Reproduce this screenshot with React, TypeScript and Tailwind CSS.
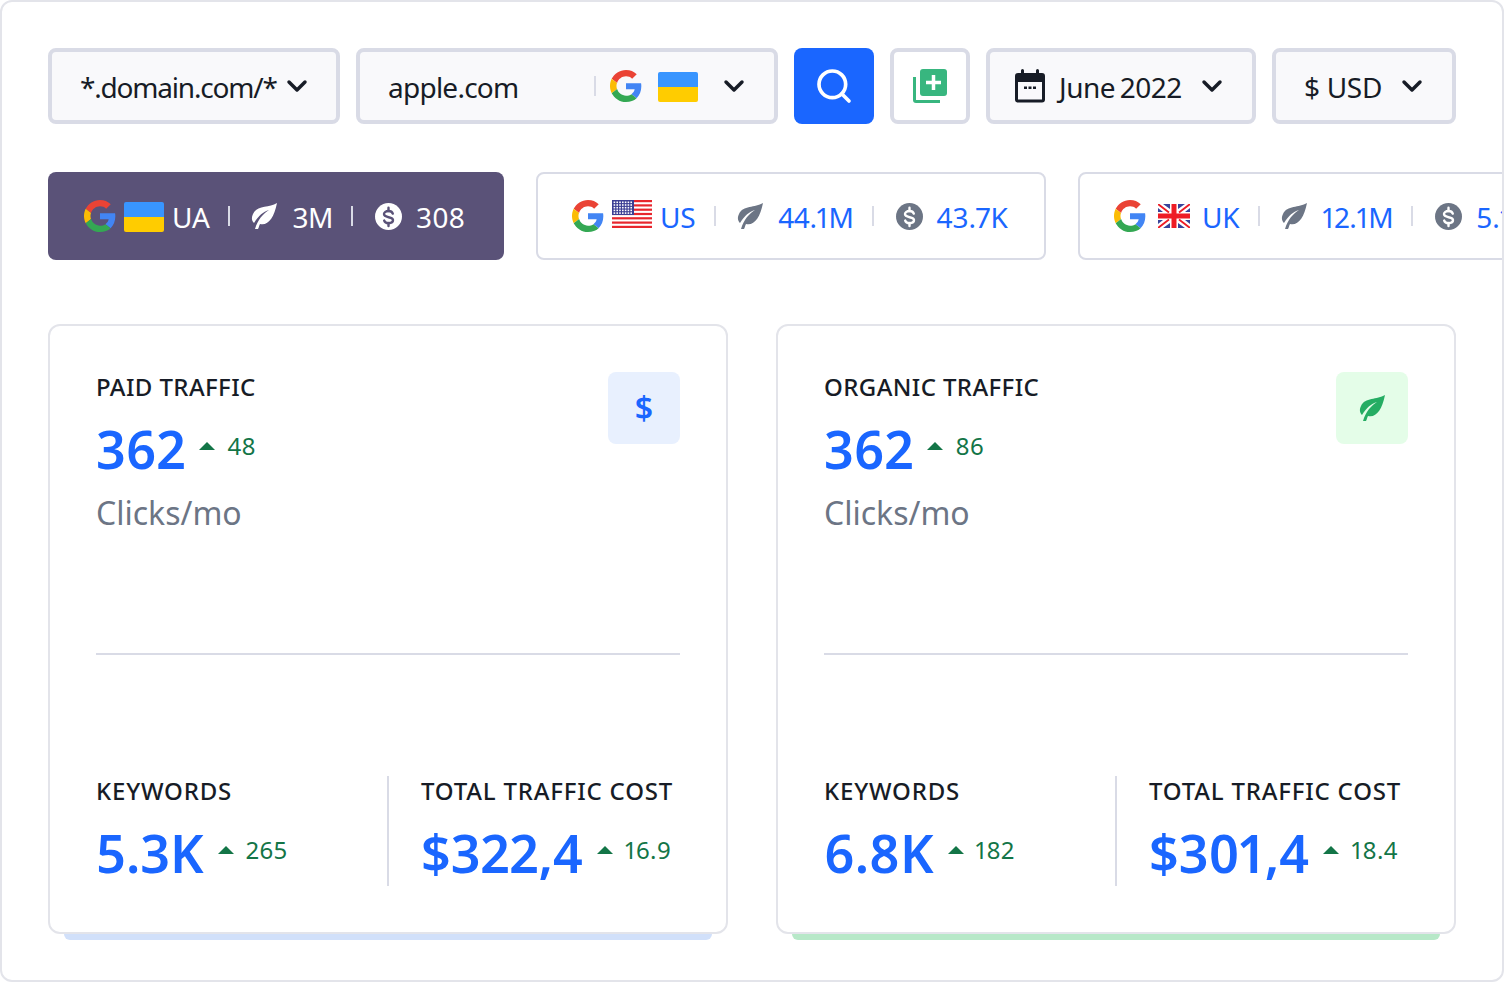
import { ChevronDown, Search } from 'lucide-react'

const font = "font-['Noto_Sans',sans-serif]"

function GoogleIcon() {
  return (
    <svg viewBox="0 0 48 48" className="h-8 w-8 shrink-0">
      <path fill="#EA4335" d="M24 9.5c3.5 0 6.7 1.2 9.2 3.6l6.9-6.9C35.9 2.4 30.5 0 24 0 14.6 0 6.5 5.4 2.6 13.2l8 6.2C12.5 13.7 17.800 9.500 24 9.500z" />
      <path fill="#4285F4" d="M47 24.500c0-1.600-.1-3.100-.4-4.500H24v9h13c-.6 3-2.200 5.500-4.800 7.200l7.700 6C44.400 38 47 31.800 47 24.500z" />
      <path fill="#FBBC05" d="M10.500 28.600c-.5-1.400-.8-3-.8-4.600s.3-3.200.8-4.600l-8-6.200C.9 16.500 0 20.100 0 24s.9 7.500 2.600 10.800l7.900-6.200z" />
      <path fill="#34A853" d="M24 48c6.500 0 11.900-2.100 15.900-5.800l-7.700-6c-2.200 1.500-5 2.300-8.200 2.300-6.200 0-11.500-4.200-13.400-9.900l-8 6.200C6.500 42.600 14.600 48 24 48z" />
    </svg>
  )
}

function UaFlag() {
  return (
    <div className="mt-0.5 flex h-[30px] w-10 shrink-0 flex-col overflow-hidden rounded-[2px]">
      <div className="flex-1 bg-[#3895ff]" />
      <div className="flex-1 bg-[#ffcc00]" />
    </div>
  )
}

function UsFlag() {
  const stripes = [0, 1, 2, 3, 4, 5, 6]
  return (
    <svg viewBox="0 0 40 28" className="-mt-1 h-7 w-10 shrink-0">
      <rect width="40" height="28" fill="#fff" />
      {stripes.map(i => (
        <rect key={i} y={i * 4.3} width="40" height="2.2" fill="#e8262d" />
      ))}
      <rect width="22" height="15" fill="#3c3f94" />
      {[0, 1, 2, 3, 4].map(r =>
        [0, 1, 2, 3, 4, 5, 6].map(c => (
          <rect key={`${r}-${c}`} x={1.6 + c * 2.8} y={1.5 + r * 2.7} width="1.6" height="1.6" fill="#fff" />
        ))
      )}
    </svg>
  )
}

function UkFlag() {
  return (
    <svg viewBox="0 0 32 24" className="mx-1 h-6 w-8 shrink-0">
      <rect width="32" height="24" fill="#fff" />
      <path fill="#39449b" d="M5 0h7v5zM27 0h-7v5zM5 24h7v-5zM27 24h-7v-5zM0 4l5 4H0zM32 4l-5 4h5zM0 20l5-4H0zM32 20l-5-4h5z" />
      <path stroke="#ee1c25" strokeWidth="1.800" d="M0 0l11 8.500M32 0 21 8.500M0 24l11-8.500M32 24 21 15.500" />
      <path fill="#ee1c25" d="M13.500 0h5v9.500H32v5H18.500V24h-5v-9.500H0v-5h13.500z" />
    </svg>
  )
}

function Leaf({ className }: { className: string }) {
  return (
    <svg viewBox="0 0 26 26" className={className} fill="currentColor">
      <path d="M26 0C18 5 6 2 2 11c-2 4-1 7 1 9 5-8 9-11 15-13C12 11 7 16 4 26l3 0c1-2 1-3 2-5 8 2 14-6 17-21z" />
    </svg>
  )
}

// round coin with a dollar mark cut out of it
function Coin({ fill, cut }: { fill: string; cut: string }) {
  return (
    <svg viewBox="0 0 27 27" className="ml-[22px] h-[27px] w-[27px] shrink-0" fill="none">
      <circle cx="13.500" cy="13.500" r="13.500" fill={fill} />
      <path
        d="M17.800 10.600c-.5-1.500-2.200-2.600-4.300-2.600-2.600 0-4.500 1.300-4.500 3.100 0 4.300 9 2 9 6 0 1.800-1.900 3.100-4.500 3.100-2.100 0-3.800-1.100-4.300-2.600"
        stroke={cut}
        strokeWidth="2.400"
        strokeLinecap="round"
      />
      <path d="M13.500 4.800V8M13.500 20v3" stroke={cut} strokeWidth="2.400" strokeLinecap="round" />
    </svg>
  )
}

function CalendarIcon() {
  return (
    <svg viewBox="0 0 30 34" className="h-[34px] w-[30px] shrink-0" fill="none">
      <rect x="1.500" y="5.500" width="27" height="26.500" rx="1.500" stroke="#171c26" strokeWidth="3" />
      <path d="M1.500 7h27v6h-27z" fill="#171c26" />
      <path d="M7.500 1.500v5M22.500 1.500v5" stroke="#171c26" strokeWidth="3" strokeLinecap="round" />
      <path d="M9 17.500h3V20H9zM13.500 17.500h3V20h-3zM18 17.500h3V20h-3z" fill="#171c26" />
    </svg>
  )
}

function AddListIcon() {
  return (
    <svg viewBox="0 0 34 34" className="h-[34px] w-[34px]" fill="none">
      <path d="M1.500 8v23a1.500 1.500 0 0 0 1.500 1.500h24" stroke="#38b67f" strokeWidth="3" />
      <rect x="7" y="0" width="27" height="27" rx="3" fill="#38b67f" />
      <path d="M20.500 6v15M13 13.500h15" stroke="#fff" strokeWidth="3.500" />
    </svg>
  )
}

function Box({ className, children }: { className: string; children: React.ReactNode }) {
  return (
    <div className={`flex h-[76px] shrink-0 items-center rounded-lg border-4 border-[#d9dbe6] ${className}`}>
      {children}
    </div>
  )
}

function Chevron({ className = '' }: { className?: string }) {
  return <ChevronDown className={`h-8 w-8 shrink-0 text-[#171c26] ${className}`} strokeWidth={2.6} />
}

function Divider({ className }: { className: string }) {
  return <div className={`h-5 w-0.5 shrink-0 ${className}`} />
}

function Toolbar() {
  return (
    <div className="flex gap-4 text-[28px] text-[#171c26]">
      <Box className="w-[292px] bg-[#f9f9fb] pl-7">
        <span className="pt-0.5 tracking-[-1.2px]">*.domain.com/*</span>
        <Chevron className="ml-1" />
      </Box>
      <Box className="w-[422px] bg-[#f9f9fb] pl-7">
        <span className="w-[206px] pt-0.5 tracking-[-0.75px]">apple.com</span>
        <Divider className="bg-[#d9dbe6]" />
        <div className="ml-3.5"><GoogleIcon /></div>
        <div className="ml-4"><UaFlag /></div>
        <Chevron className="ml-5" />
      </Box>
      <div className="flex h-[76px] w-20 shrink-0 items-center justify-center rounded-lg bg-[#1a66ff]">
        <Search className="h-10 w-10 text-white" strokeWidth={2.2} />
      </div>
      <Box className="w-20 justify-center bg-white">
        <AddListIcon />
      </Box>
      <Box className="w-[270px] bg-[#f9f9fb] pl-[25px]">
        <CalendarIcon />
        <span className="ml-3.5 whitespace-nowrap pt-0.5 tracking-[-0.5px] [word-spacing:-2px]">June 2022</span>
        <Chevron className="ml-[14px]" />
      </Box>
      <Box className="w-[184px] bg-[#f9f9fb] pl-7">
        <span className="whitespace-nowrap pt-0.5 tracking-[-0.3px]">$ USD</span>
        <Chevron className="ml-[14px]" />
      </Box>
    </div>
  )
}

type ChipProps = {
  flag: React.ReactNode
  code: string
  organic: string
  paid: string
  active?: boolean
  className: string
}

function Chip({ flag, code, organic, paid, active, className }: ChipProps) {
  const text = active ? 'text-white' : 'text-[#1a66ff]'
  const icon = active ? 'text-white' : 'text-[#6c7585]'
  return (
    <div
      className={`flex h-[88px] shrink-0 items-center rounded-lg text-[28px] proportional-nums ${
        active ? 'bg-[#5a5278] pl-9' : 'border-2 border-[#d9dbe6] bg-white pl-[34px]'
      } ${text} ${className}`}
    >
      <GoogleIcon />
      <div className="ml-2 flex items-center">{flag}</div>
      <span className="ml-2 pt-0.5 tracking-[-0.3px]">{code}</span>
      <Divider className="ml-[19px] bg-[#d9dbe6]" />
      <Leaf className={`ml-[21px] h-[26px] w-[26px] shrink-0 ${icon}`} />
      <span className="ml-[15px] whitespace-nowrap pt-0.5 tracking-[-0.4px]">{organic}</span>
      <Divider className="ml-[18px] bg-[#d9dbe6]" />
      <Coin fill={active ? '#ffffff' : '#6c7585'} cut={active ? '#5a5278' : '#ffffff'} />
      <span className="ml-[14px] whitespace-nowrap pt-0.5">{paid}</span>
    </div>
  )
}

function Delta({ value }: { value: string }) {
  return (
    <div className="flex items-center gap-3 pb-1.5 text-2xl tracking-[0.4px] text-[#137547] proportional-nums">
      <div className="h-0 w-0 border-x-8 border-b-[8px] border-x-transparent border-b-[#137547]" />
      <span>{value}</span>
    </div>
  )
}

function Stat({ label, value, delta, className = '' }: { label: string; value: string; delta: string; className?: string }) {
  return (
    <div className={className}>
      <div className="-mt-px text-2xl leading-8 font-medium tracking-[0.8px] whitespace-nowrap text-[#171c26]">{label}</div>
      <div className="mt-[18px] flex items-center gap-3.5">
        <span className="text-[52px] leading-[56px] font-semibold text-[#1a66ff] proportional-nums">{value}</span>
        <Delta value={delta} />
      </div>
    </div>
  )
}

type CardProps = {
  title: string
  clicks: string
  delta: string
  badge: React.ReactNode
  badgeBg: string
  accent: string
  keywords: [string, string]
  cost: [string, string]
}

function Card({ title, clicks, delta, badge, badgeBg, accent, keywords, cost }: CardProps) {
  return (
    <div className="flex w-[680px] flex-col">
      <div className="flex h-[610px] flex-col rounded-xl border-2 border-[#e3e4ea] bg-white px-[46px] pt-[46px]">
        <div className="flex h-[283px] justify-between border-b-2 border-[#d9dbe6]">
          <div>
            <div className="-mt-px text-2xl leading-8 font-medium tracking-[0.4px] text-[#171c26]">{title}</div>
            <div className="mt-[18px] flex items-center gap-3.5">
              <span className="text-[52px] leading-[56px] font-semibold text-[#1a66ff] proportional-nums">{clicks}</span>
              <Delta value={delta} />
            </div>
            <div className="mt-4 text-[32px] leading-10 text-[#6c7585]">Clicks/mo</div>
          </div>
          <div className={`flex h-[72px] w-[72px] items-center justify-center rounded-lg ${badgeBg}`}>{badge}</div>
        </div>
        <div className="mt-[121px] flex">
          <Stat label="KEYWORDS" value={keywords[0]} delta={keywords[1]} className="w-[291px]" />
          <div className="h-[110px] border-l-2 border-[#d9dbe6] pl-8">
            <Stat label="TOTAL TRAFFIC COST" value={cost[0]} delta={cost[1]} />
          </div>
        </div>
      </div>
      <div className={`mx-4 h-1.5 rounded-b-md ${accent}`} />
    </div>
  )
}

export default function App() {
  return (
    <div className={`h-[982px] w-[1504px] overflow-hidden rounded-xl border-2 border-[#e3e4ea] bg-white p-[46px] ${font}`}>
      <Toolbar />
      <div className="mt-12 flex w-[1456px] gap-8">
        <Chip active flag={<UaFlag />} code="UA" organic="3M" paid="308" className="w-[456px]" />
        <Chip flag={<UsFlag />} code="US" organic="44.1M" paid="43.7K" className="w-[510px]" />
        <Chip flag={<UkFlag />} code="UK" organic="12.1M" paid="5.1K" className="w-[510px]" />
      </div>
      <div className="mt-16 flex gap-12">
        <Card
          title="PAID TRAFFIC"
          clicks="362"
          delta="48"
          badgeBg="bg-[#e8f0fe]"
          accent="bg-[#d1e0fa]"
          badge={<span className="text-[32px] font-semibold text-[#1a66ff]">$</span>}
          keywords={['5.3K', '265']}
          cost={['$322,4', '16.9']}
        />
        <Card
          title="ORGANIC TRAFFIC"
          clicks="362"
          delta="86"
          badgeBg="bg-[#e4fde8]"
          accent="bg-[#b7e8c8]"
          badge={<Leaf className="h-[26px] w-[26px] text-[#25ad63]" />}
          keywords={['6.8K', '182']}
          cost={['$301,4', '18.4']}
        />
      </div>
    </div>
  )
}
